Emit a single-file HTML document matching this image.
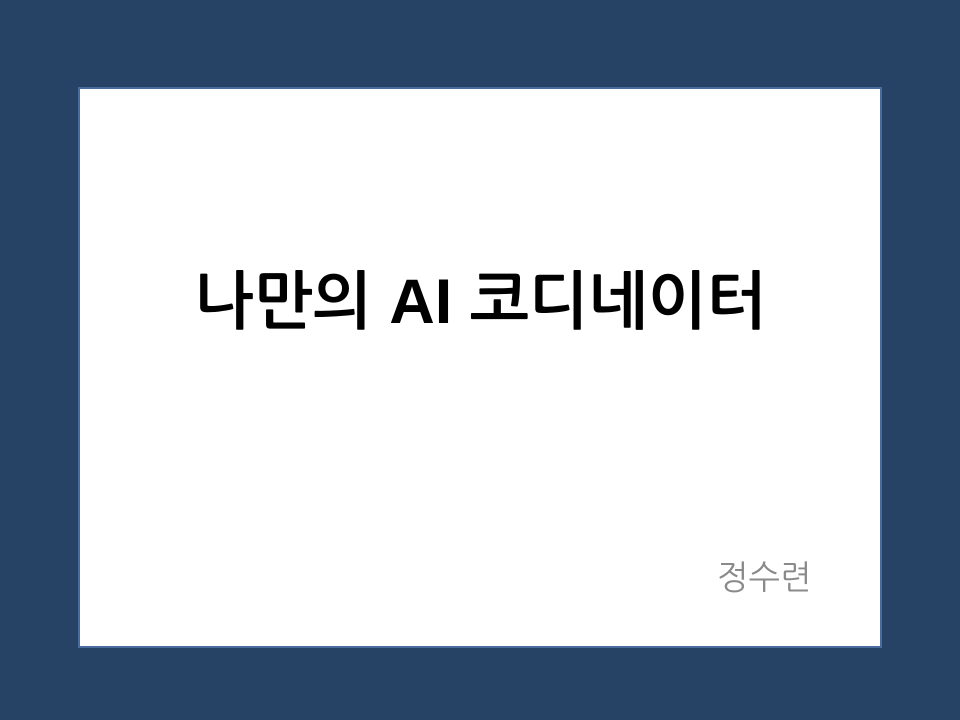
<!DOCTYPE html>
<html><head><meta charset="utf-8"><style>
html,body{margin:0;padding:0;}
body{width:960px;height:720px;background:#264264;position:relative;overflow:hidden;}
.box{position:absolute;left:78px;top:87px;width:800px;height:557px;background:#fff;border:2px solid #4a6c9c;}
.t{position:absolute;left:0;width:960px;top:257px;text-align:center;font-family:"Liberation Sans","NanumGothic","Noto Sans CJK KR",sans-serif;font-weight:bold;font-size:63px;color:#000;line-height:90px;white-space:nowrap;}
.s{position:absolute;left:717px;top:555px;font-family:"Liberation Sans","NanumGothic","Noto Sans CJK KR",sans-serif;font-size:33.5px;color:#8a8a8a;line-height:48px;white-space:nowrap;}
</style></head><body>
<div class="box"></div>
<div class="t">나만의 AI 코디네이터</div>
<div class="s">정수련</div>
</body></html>
